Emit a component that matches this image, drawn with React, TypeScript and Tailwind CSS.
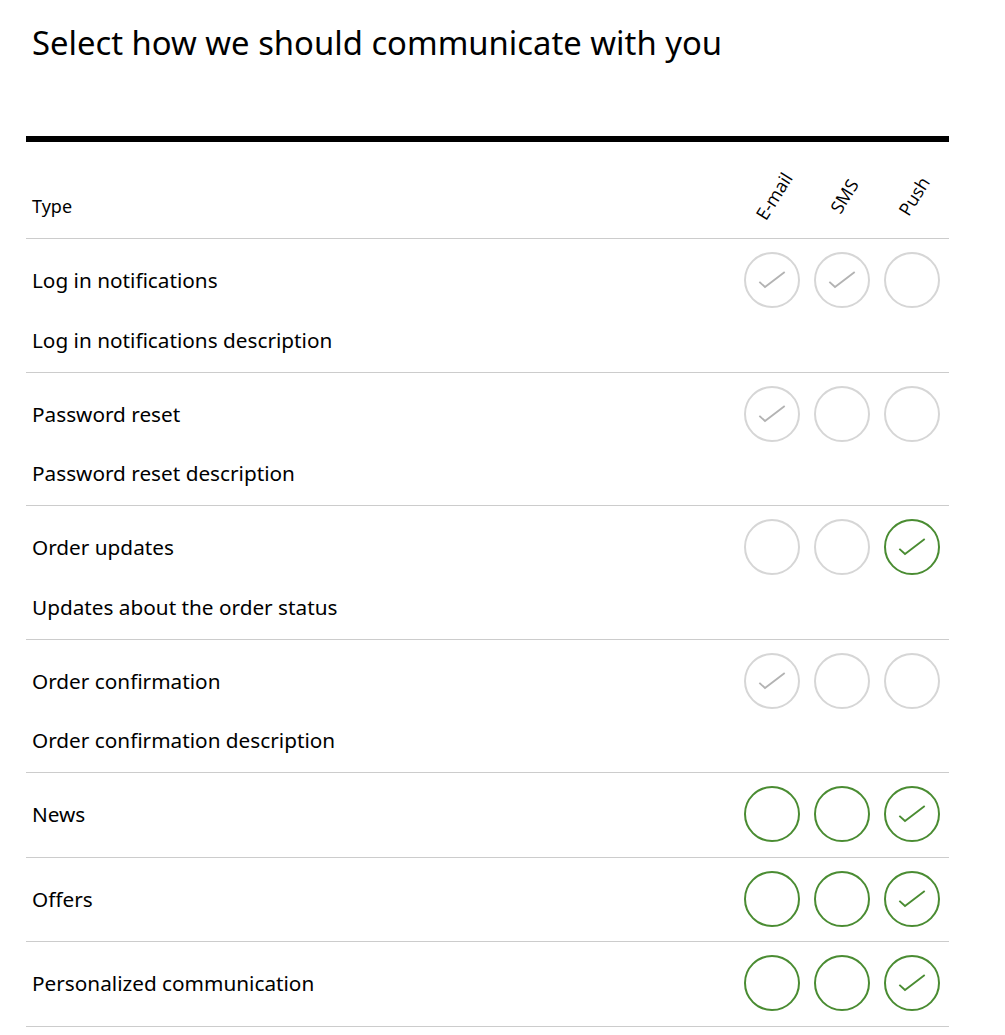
import React from "react";

type State = "grey" | "greyEmpty" | "greenEmpty" | "green";

const rows: { title: string; desc?: string; states: State[] }[] = [
  { title: "Log in notifications", desc: "Log in notifications description", states: ["grey", "grey", "greyEmpty"] },
  { title: "Password reset", desc: "Password reset description", states: ["grey", "greyEmpty", "greyEmpty"] },
  { title: "Order updates", desc: "Updates about the order status", states: ["greyEmpty", "greyEmpty", "green"] },
  { title: "Order confirmation", desc: "Order confirmation description", states: ["grey", "greyEmpty", "greyEmpty"] },
  { title: "News", states: ["greenEmpty", "greenEmpty", "green"] },
  { title: "Offers", states: ["greenEmpty", "greenEmpty", "green"] },
  { title: "Personalized communication", states: ["greenEmpty", "greenEmpty", "green"] },
];

function Circle({ state }: { state: State }) {
  const green = state === "green" || state === "greenEmpty";
  const stroke = green ? "#4a8c32" : "#d6d6d6";
  const check = state === "green" ? "#4a8c32" : state === "grey" ? "#b3b3b3" : null;
  return (
    <svg width="56" height="56" viewBox="0 0 56 56" className="shrink-0">
      <circle cx="28" cy="28" r="27" fill="white" stroke={stroke} strokeWidth="2" />
      {check && (
        <polyline
          points="16,30.5 21,35 40,20.5"
          fill="none"
          stroke={check}
          strokeWidth="1.8"
          strokeLinecap="square"
          strokeLinejoin="miter"
        />
      )}
    </svg>
  );
}

export default function App() {
  const font = { fontFamily: "'Noto Sans', Roboto, sans-serif" };
  return (
    <div className="bg-white w-[1005px] min-h-[1035px] text-black" style={font}>
      <div className="pl-[26px] pr-[56px]">
        <h1 className="pt-[20px] pl-[6px] text-[32.8px] leading-[46px] font-normal h-[136px]">
          Select how we should communicate with you
        </h1>
        <div className="h-[6px] bg-black" />
        <div className="flex items-end justify-between h-[97px] border-b border-[#cccccc] pl-[6px] pr-[9px]">
          <div className="text-[18px] leading-[24px] pb-[20px]">Type</div>
          <div className="flex gap-[14px] pb-[9px]" style={{ fontFamily: "'Open Sans', sans-serif" }}>
            {["E-mail", "SMS", "Push"].map((l) => (
              <div key={l} className="w-[56px] h-[66px] flex items-center justify-center pl-[4px]">
                <span className="inline-block text-[18px] leading-[22px] -rotate-[58deg] whitespace-nowrap">{l}</span>
              </div>
            ))}
          </div>
        </div>
        {rows.map((r) => (
          <div key={r.title} className="border-b border-[#cccccc] pl-[6px] pr-[9px] pt-[13px]">
            <div className="flex items-center justify-between h-[56px]">
              <div className="text-[20.75px] leading-[28px]">{r.title}</div>
              <div className="flex gap-[14px]">
                {r.states.map((s, i) => (
                  <Circle key={i} state={s} />
                ))}
              </div>
            </div>
            {r.desc ? (
              <div className="h-[63.5px] flex items-center text-[20.75px] leading-[28px]">{r.desc}</div>
            ) : (
              <div className="h-[14.5px]" />
            )}
          </div>
        ))}
      </div>
    </div>
  );
}
